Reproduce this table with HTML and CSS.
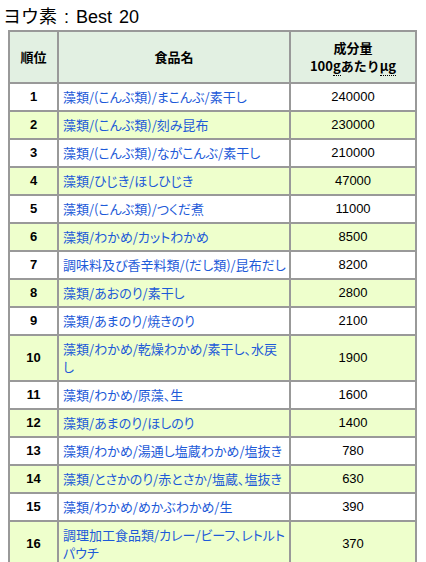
FILE: index.html
```html
<!DOCTYPE html>
<html lang="ja">
<head>
<meta charset="utf-8">
<title>ヨウ素 : Best 20</title>
<link rel="stylesheet" href="styles.css">
</head>
<body>
<h1 class="title">ヨウ素 : Best 20</h1>
<table class="rank">
  <colgroup>
    <col class="c-rank">
    <col class="c-name">
    <col class="c-val">
  </colgroup>
  <thead>
    <tr>
      <th>順位</th>
      <th>食品名</th>
      <th>成分量<br>100<abbr title="グラム">g</abbr>あたり<abbr title="マイクログラム">μg</abbr></th>
    </tr>
  </thead>
  <tbody>
    <tr><td class="no">1</td><td class="name"><a href="#">藻類/(こんぶ類)/まこんぶ/素干し</a></td><td class="val">240000</td></tr>
    <tr><td class="no">2</td><td class="name"><a href="#">藻類/(こんぶ類)/刻み昆布</a></td><td class="val">230000</td></tr>
    <tr><td class="no">3</td><td class="name"><a href="#">藻類/(こんぶ類)/ながこんぶ/素干し</a></td><td class="val">210000</td></tr>
    <tr><td class="no">4</td><td class="name"><a href="#">藻類/ひじき/ほしひじき</a></td><td class="val">47000</td></tr>
    <tr><td class="no">5</td><td class="name"><a href="#">藻類/(こんぶ類)/つくだ煮</a></td><td class="val">11000</td></tr>
    <tr><td class="no">6</td><td class="name"><a href="#">藻類/わかめ/カットわかめ</a></td><td class="val">8500</td></tr>
    <tr><td class="no">7</td><td class="name"><a href="#">調味料及び香辛料類/(だし類)/昆布だし</a></td><td class="val">8200</td></tr>
    <tr><td class="no">8</td><td class="name"><a href="#">藻類/あおのり/素干し</a></td><td class="val">2800</td></tr>
    <tr><td class="no">9</td><td class="name"><a href="#">藻類/あまのり/焼きのり</a></td><td class="val">2100</td></tr>
    <tr><td class="no">10</td><td class="name"><a href="#">藻類/わかめ/乾燥わかめ/素干し、水戻し</a></td><td class="val">1900</td></tr>
    <tr><td class="no">11</td><td class="name"><a href="#">藻類/わかめ/原藻、生</a></td><td class="val">1600</td></tr>
    <tr><td class="no">12</td><td class="name"><a href="#">藻類/あまのり/ほしのり</a></td><td class="val">1400</td></tr>
    <tr><td class="no">13</td><td class="name"><a href="#">藻類/わかめ/湯通し塩蔵わかめ/塩抜き</a></td><td class="val">780</td></tr>
    <tr><td class="no">14</td><td class="name"><a href="#">藻類/とさかのり/赤とさか/塩蔵、塩抜き</a></td><td class="val">630</td></tr>
    <tr><td class="no">15</td><td class="name"><a href="#">藻類/わかめ/めかぶわかめ/生</a></td><td class="val">390</td></tr>
    <tr><td class="no">16</td><td class="name"><a href="#">調理加工食品類/カレー/ビーフ、レトルトパウチ</a></td><td class="val">370</td></tr>
  </tbody>
</table>
</body>
</html>
```

FILE: styles.css
```css
html, body {
  margin: 0;
  padding: 0;
  background: #ffffff;
}

body {
  font-family: "Liberation Sans", "Noto Sans CJK JP", sans-serif;
  color: #000000;
}

.title {
  margin: 0;
  padding: 5px 0 1px 3px;
  font-family: "Liberation Sans", "Noto Sans CJK JP", sans-serif;
  font-size: 18px;
  line-height: 24px;
  font-weight: normal;
  word-spacing: 2px;
}

.rank {
  margin-left: 8px;
  width: 409px;
  table-layout: fixed;
  border-collapse: separate;
  border-spacing: 2px;
  background: #999999;
  font-size: 13px;
  line-height: 18px;
}

.c-rank { width: 47px; }
.c-name { width: 230px; }
.c-val  { width: 124px; }

.rank th {
  background: #e2f0e2;
  font-family: "Noto Sans CJK JP", sans-serif;
  font-weight: bold;
  font-size: 13px;
  text-align: center;
  padding: 7px 2px;
}

.rank th abbr {
  text-decoration: none;
  border-bottom: 1px dotted #000;
}

.rank td {
  background: #ffffff;
  padding: 4px 2px 4px 4px;
  vertical-align: middle;
}

.rank tbody tr:nth-child(even) td {
  background: #eeffcc;
}

.rank td.no {
  text-align: center;
  font-weight: bold;
  padding: 4px 2px;
}

.rank td.name {
  font-family: "Noto Sans CJK JP", sans-serif;
  font-feature-settings: "palt";
  text-align: left;
}

.rank td.name a {
  color: #1d5ad8;
  text-decoration: none;
}

.rank td.val {
  text-align: center;
  padding: 4px 2px;
}
```
